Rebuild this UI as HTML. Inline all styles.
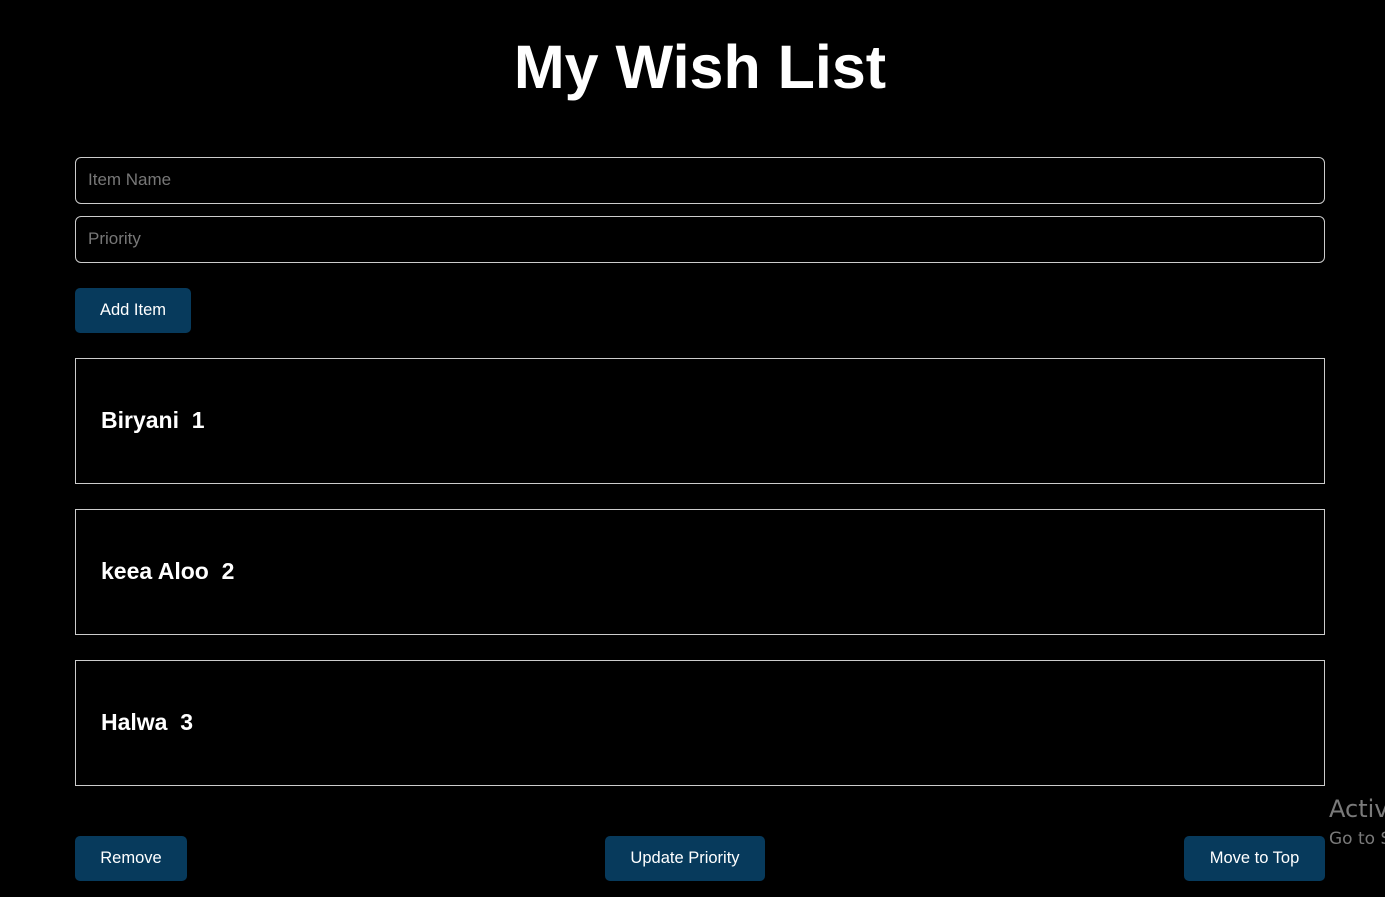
<!DOCTYPE html>
<html><head><meta charset="utf-8"><style>
html,body{margin:0;padding:0;background:#000;width:1385px;height:897px;overflow:hidden;font-family:"Liberation Sans",Arial,sans-serif;color:#fff;position:relative}
h1{position:absolute;left:0;width:1385px;box-sizing:border-box;padding-left:15px;top:32px;margin:0;text-align:center;font-size:61px;font-weight:bold;line-height:70px}
.in{position:absolute;left:75px;border:1px solid #ccc;border-radius:6px;box-sizing:border-box;width:1250px;height:47px;color:#777;font-size:17px;line-height:43px;padding-left:12px}
.btn{position:absolute;background:#073a5c;color:#fff;font-family:"Liberation Sans",Arial,sans-serif;font-size:16.5px;border-radius:5px;text-align:center;height:45px;line-height:44px}
.card{position:absolute;left:75px;width:1250px;height:126px;border:1px solid #ccc;box-sizing:border-box;font-weight:bold;font-size:23px;line-height:122px;padding-left:25px}
.wmbox{position:absolute;left:1329px;top:790px;width:56px;height:70px;overflow:hidden}
.wm{position:absolute;left:0;color:#7a7a7a;white-space:nowrap;font-family:"DejaVu Sans",sans-serif}
</style></head><body>
<h1>My Wish List</h1>
<div class="in" style="top:157px">Item Name</div>
<div class="in" style="top:216px">Priority</div>
<div class="btn" style="left:75px;top:288px;width:116px">Add Item</div>
<div class="card" style="top:358px">Biryani&nbsp; 1</div>
<div class="card" style="top:509px">keea Aloo&nbsp; 2</div>
<div class="card" style="top:660px">Halwa&nbsp; 3</div>
<div class="btn" style="left:75px;top:836px;width:112px">Remove</div>
<div class="btn" style="left:605px;top:836px;width:160px">Update Priority</div>
<div class="btn" style="left:1184px;top:836px;width:141px">Move to Top</div>
<div class="wmbox"><div class="wm" style="top:5px;font-size:24px">Activate Windows</div>
<div class="wm" style="top:39px;font-size:17px">Go to Settings</div></div>
</body></html>
